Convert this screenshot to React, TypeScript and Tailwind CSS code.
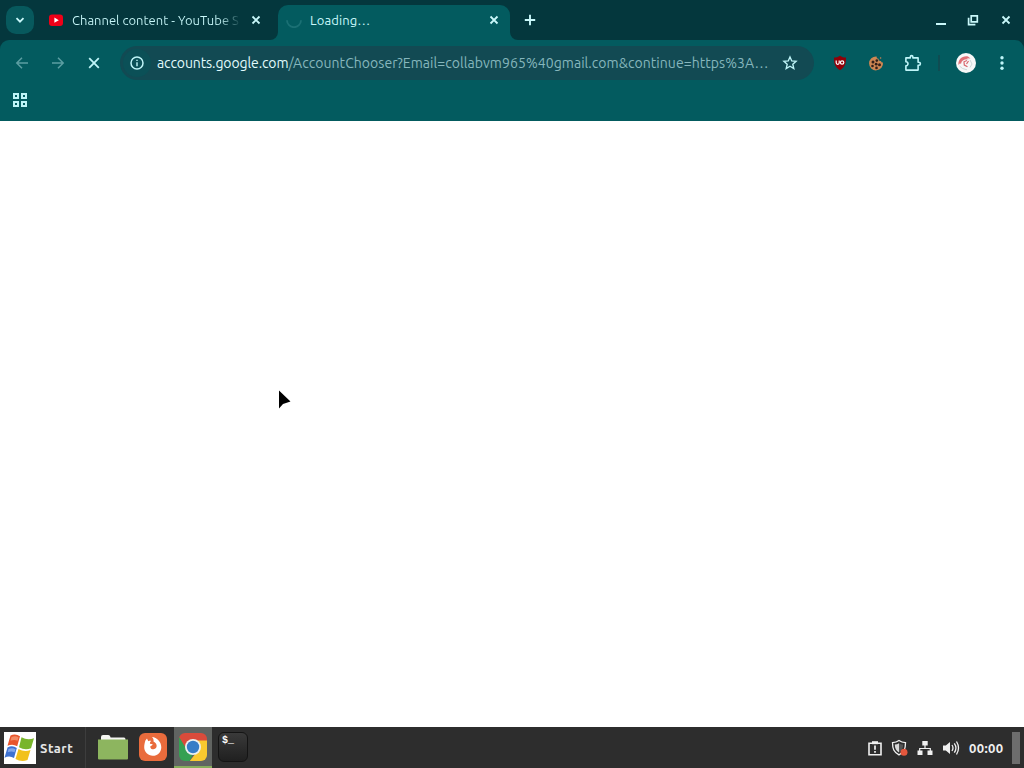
import type { ReactNode } from "react";

function Icon({ size, children, className = "" }: { size: number; children: ReactNode; className?: string }) {
  return (
    <svg width={size} height={size} viewBox={`0 0 ${size} ${size}`} fill="none" stroke="currentColor" className={`shrink-0 ${className}`}>
      {children}
    </svg>
  );
}

function CloseIcon({ className = "" }: { className?: string }) {
  return (
    <Icon size={10} className={className}>
      <path d="M1.5 1.5l7 7M8.5 1.5l-7 7" strokeWidth="1.8" />
    </Icon>
  );
}

function TabStrip() {
  return (
    <div className="flex h-10 items-center bg-[#04373d] pl-1.5 text-[#c9f8fa]">
      <button className="flex h-7 w-7 items-center justify-center rounded-[10px] bg-[#07595d]">
        <Icon size={10}>
          <path d="M1.5 3.2L5 6.7l3.5-3.5" strokeWidth="1.8" />
        </Icon>
      </button>

      {/* Background tab */}
      <div className="flex h-full w-[244px] items-center pl-[14px]">
        <Icon size={16}>
          <rect x="1" y="2.5" width="14" height="11.5" rx="3" fill="#f00018" stroke="none" />
          <path d="M6.4 5.6l4.4 2.6-4.4 2.6z" fill="#fff" stroke="none" />
        </Icon>
        <span className="mt-px ml-2 w-[169px] bg-linear-to-r from-[#c9f8fa] from-[87%] to-[#c9f8fa]/0 bg-clip-text text-[13px] whitespace-nowrap text-transparent">
          Channel content - YouTube S
        </span>
        <CloseIcon className="ml-[10px]" />
      </div>

      {/* Active tab */}
      <div className="relative mt-[5px] flex h-[35px] w-[232px] items-center rounded-t-[10px] bg-[#035b5f] pb-[5px] pl-2">
        <svg width="8" height="8" className="absolute bottom-0 -left-2" fill="#035b5f">
          <path d="M8 0v8H0a8 8 0 0 0 8-8z" />
        </svg>
        <svg width="8" height="8" className="absolute -right-2 bottom-0" fill="#035b5f">
          <path d="M0 0v8h8a8 8 0 0 1-8-8z" />
        </svg>
        <Icon size={16} className="text-[#1b7074]">
          <path d="M1 8.2a7 7 0 0 0 14 0" strokeWidth="1.8" />
        </Icon>
        <span className="mt-px ml-2 w-[179px] text-[13px] tracking-[0.1px]">Loading…</span>
        <CloseIcon />
      </div>

      <Icon size={12} className="ml-[14px]">
        <path d="M6 .8v10.4M.8 6h10.4" strokeWidth="1.9" />
      </Icon>

      <div className="ml-auto flex items-center pr-[13px]">
        <Icon size={12}>
          <path d="M1 10h10" strokeWidth="2" />
        </Icon>
        <Icon size={12} className="ml-5">
          <path d="M4.2 1.8h6.1v6.1H4.2z" strokeWidth="1.7" />
          <path d="M1.6 3.7v6.9h6.8" strokeWidth="1.7" />
        </Icon>
        <CloseIcon className="ml-[22px]" />
      </div>
    </div>
  );
}

function CookieIcon() {
  return (
    <Icon size={16}>
      <path d="M8.6 1.4a2 2 0 0 0 1.8 2.3A2.3 2.3 0 0 0 13 6c.2 1 .9 1.5 2 1.5A7 7 0 1 1 8.6 1.4z" fill="#ce8652" stroke="none" />
      <g fill="#332019" stroke="none">
        <circle cx="5" cy="7" r="1.5" />
        <circle cx="8.8" cy="5.6" r="1.3" />
        <circle cx="8.2" cy="9.2" r="1.4" />
        <circle cx="4.5" cy="11" r="1.3" />
        <circle cx="11.5" cy="9.7" r="1.5" />
        <circle cx="8.5" cy="12.9" r="1.3" />
      </g>
      <circle cx="12.6" cy="3" r=".8" fill="#ce8652" stroke="none" />
    </Icon>
  );
}

function Toolbar() {
  return (
    <div className="bg-[#04373d]">
      <div className="h-[81px] rounded-t-[9px] bg-[#035b5f]">
        <div className="flex h-[46px] items-center pl-[15px] text-[#bff5f8]">
          <Icon size={14} className="text-[#5c9ea2]">
            <path d="M13 7H2M7 1.8L1.8 7 7 12.2" strokeWidth="1.5" />
          </Icon>
          <Icon size={14} className="ml-[22px] text-[#5c9ea2]">
            <path d="M1 7h11M7 1.8L12.2 7 7 12.2" strokeWidth="1.5" />
          </Icon>
          <Icon size={12} className="ml-[23px]">
            <path d="M1.2 1.2l9.6 9.6M10.8 1.2l-9.6 9.6" strokeWidth="1.8" />
          </Icon>

          <div className="ml-5 flex h-[34px] w-[694px] items-center rounded-full bg-[#124a53] pl-[3px]">
            <div className="flex h-7 w-7 items-center justify-center rounded-full bg-[#0b5057]">
              <Icon size={14}>
                <circle cx="7" cy="7" r="6" strokeWidth="1.5" />
                <path d="M7 6.2v4M7 3.7v1.4" strokeWidth="1.4" />
              </Icon>
            </div>
            <span className="ml-[6px] w-[625px] text-[14px] tracking-[0.06px] whitespace-nowrap text-[#86b7bd]">
              <span className="tracking-[-0.1px] text-[#e2fcfd]">accounts.google.com</span>
              /AccountChooser?Email=collabvm965%40gmail.com&amp;continue=https%3A…
            </span>
            <Icon size={16}>
              <path d="M8 1.9l1.75 4 4.35.4-3.3 2.9 1 4.3L8 11.2l-3.8 2.3 1-4.3-3.3-2.9 4.35-.4z" strokeWidth="1.35" />
            </Icon>
          </div>

          <Icon size={16} className="ml-[18px]">
            <path d="M8 .8c1.8 1.3 3.8 1.8 6 1.8 0 6.3-.8 9.4-6 12.6C2.8 12 2 8.9 2 2.6 4.2 2.6 6.2 2.1 8 .8z" fill="#900008" stroke="none" />
            <path d="M4.2 5.6v2.2a1.5 1.5 0 0 0 3 0V5.6" stroke="#fff" strokeWidth="1.2" />
            <circle cx="10.1" cy="7.5" r="1.7" stroke="#fff" strokeWidth="1.2" />
          </Icon>
          <div className="ml-5">
            <CookieIcon />
          </div>
          <Icon size={18} className="mb-px ml-[20px]">
            <path d="M1.9 3.9h4.4V2.9a1.3 1.3 0 0 1 2.6 0v1h5.2v4.3h.8a1.5 1.5 0 0 1 0 3h-.8v4.9H1.9v-4.2a2.1 2.1 0 0 0 0-4.2z" strokeWidth="1.6" strokeLinejoin="round" />
          </Icon>
          <div className="ml-4 h-4 w-0.5 bg-[#0f4c52]" />
          <Icon size={20} className="ml-4">
            <circle cx="10" cy="10" r="10" fill="#f7f8f8" stroke="none" />
            <path d="M2.5 12c-.8-5 3.5-9.5 9.5-8.5l2.500 2-4-.3 2.500 1.200C8 6 5.500 7.500 5 11l-1-.8z" fill="#e07076" stroke="none" />
            <path d="M11 7.500l-3 1.300.3 3.200 3.200 1.700M12.500 8l-2 3" stroke="#d9666d" strokeWidth="1.200" />
            <path d="M3.500 13l3 2.500 4.500 1.300M14 7l2 4-2 3.500" stroke="#cdd9da" />
          </Icon>
          <Icon size={16} className="ml-[18px]">
            <g fill="currentColor" stroke="none">
              <circle cx="8" cy="2.7" r="1.7" />
              <circle cx="8" cy="8" r="1.7" />
              <circle cx="8" cy="13.3" r="1.7" />
            </g>
          </Icon>
        </div>

        {/* Bookmarks bar */}
        <div className="flex h-7 items-center pl-[13px] text-[#bff5f8]">
          <Icon size={14}>
            <path d="M1 1h4v4H1zM9 1h4v4H9zM1 9h4v4H1zM9 9h4v4H9z" strokeWidth="2" />
          </Icon>
        </div>
      </div>
    </div>
  );
}

function StartLogo() {
  return (
    <svg width="32" height="32" viewBox="0 0 32 32" className="shrink-0 bg-white">
      <path d="M6.5 3.5q5-2.5 9.5.8l-2.8 10q-4.500-3-9.700-.5z" fill="#e8552c" />
      <path d="M17.5 5.3q6 3.5 12.500 1l-3 10q-6 2.500-12-1z" fill="#79b52c" />
      <path d="M3.5 15.5q5-2.500 9.300.5L10 26q-4.500-3-9.500-.3z" fill="#3d72d2" />
      <path d="M14.5 17q6 3.500 12 1l-3 10q-6 2.500-12-1z" fill="#f2c11c" />
      <path d="M7.5 5q4-1.500 7 .3l-1 3.500q-3-1.500-7 0z" fill="#f38a63" />
      <path d="M4.5 17q4-1.500 7 .3l-1 3q-3-1.500-6.800 0z" fill="#80a6ec" />
    </svg>
  );
}

function FolderIcon() {
  return (
    <svg width="32" height="32" viewBox="0 0 32 32">
      <path d="M4 5q0-2 2-2h5q1.500 0 2 1l.6 1.500H27q1.500 0 1.500 2V11H4z" fill="#f5f6f2" />
      <path d="M1 7.500h30v19q0 1-1 1H2q-1 0-1-1z" fill="#8db55f" />
    </svg>
  );
}

function FirefoxIcon() {
  return (
    <svg width="30" height="30" viewBox="0 0 30 30" className="-mt-0.5">
      <rect x="1" y="1" width="28" height="28" rx="6" fill="#e96b3c" />
      <path d="M7.4 8.500L9 6.500l1.300 2.700c1.200-.5 2-.4 3-.2-1.200.8-1.500 1.700-1.300 2.800l2.700.5c-.2 1.300-1.500 1.500-2.500 2.100.2 2.100 1.700 3 3.300 2.800 2.200-.2 3.400-2 3.100-4-.3-1.700-1.500-2.700-3.100-3.700.3-1.900-.2-3.300-1.500-4.500 4.800.5 9.300 4.700 9.300 10.200 0 5-3.800 8.600-8.500 8.600s-8.600-3.700-8.600-8.500c0-2.700.6-4.800 1.200-6.800z" fill="#fff" />
    </svg>
  );
}

function ChromeIcon() {
  return (
    <svg width="30" height="30" viewBox="0 0 30 30">
      <defs>
        <clipPath id="chrome-tile">
          <rect x="1" y="1" width="28" height="28" rx="6" />
        </clipPath>
      </defs>
      <g clipPath="url(#chrome-tile)">
        <path d="M0 0h30v9H15l-7 9L0 4z" fill="#da4b3b" />
        <path d="M0 3l9 15 6 4-4 8H0z" fill="#35a052" />
        <path d="M15 8.500h15V30H11l10-13z" fill="#f9c92f" />
      </g>
      <circle cx="15" cy="15" r="8" fill="#edf0ef" />
      <circle cx="15" cy="15" r="6.200" fill="#367dc7" />
    </svg>
  );
}

function TerminalIcon() {
  return (
    <div className="-mt-0.5 h-[30px] w-[30px] rounded-[6px] border border-[#141414] bg-linear-to-b from-[#3a3a3a] to-[#202020] pt-px pl-[3px] font-['Liberation_Mono',monospace] text-[10px] leading-[13px] font-bold text-white">
      $_
    </div>
  );
}

function Tray() {
  return (
    <div className="ml-auto flex h-full items-center text-[#f0f0f0]">
      <Icon size={16}>
        <path d="M2 3.300h12v11.500H2z" strokeWidth="1.600" />
        <path d="M5 1.200h6v3H5z" fill="currentColor" stroke="none" />
        <path d="M8 5.500v4.200M8 11v1.800" strokeWidth="1.700" />
      </Icon>
      <Icon size={18} className="ml-2">
        <path d="M8 1.600c2 1.500 4 2 6.500 2 0 6-1.200 9.500-6.500 12.300C2.700 13.100 1.500 9.600 1.500 3.600 4 3.600 6 3.100 8 1.600z" strokeWidth="1.300" />
        <path d="M8 4.200c1.200.8 2.600 1.200 4.200 1.300-.2 4-1.200 6-4.200 8z" fill="#555" stroke="none" />
        <path d="M8 4.200C6.800 5 5.400 5.400 3.800 5.500c.1 4 1.200 6 4.200 8z" fill="#d8d8d8" stroke="none" />
        <circle cx="13" cy="13.200" r="3.500" fill="#e4573d" stroke="none" />
      </Icon>
      <Icon size={16} className="ml-2">
        <path d="M8 5v3M2.700 11V8.500h10.600V11" strokeWidth="1.200" />
        <path d="M5.300 1h5.400v4.500H5.300zM.5 10.500h5V15h-5zM10.500 10.500h5V15h-5z" fill="currentColor" stroke="none" />
      </Icon>
      <Icon size={18} className="ml-[9px]">
        <path d="M1 6.500h2.800L8 3v12l-4.200-3.500H1z" fill="currentColor" stroke="none" />
        <path d="M10 6q2 3 0 6M12.300 4.300q3.300 4.700 0 9.400M14.500 2.500q4 6.500 0 13" strokeWidth="1.300" />
      </Icon>
      <span className="mt-0.5 ml-[9px] w-[35px] text-[13px] font-bold tracking-[0.4px] whitespace-nowrap">00:00</span>
      <div className="mr-1 ml-2 h-8 w-2 bg-[#6d6d6d]" />
    </div>
  );
}

function Taskbar() {
  return (
    <div className="flex h-[41px] items-center bg-[#2d2d2d]">
      <button className="flex h-full w-[86px] items-center border-r border-[#3d3d3d] pl-1">
        <StartLogo />
        <span className="mt-0.5 ml-1 text-[13px] font-bold tracking-[0.5px] text-[#e5e5e5]">Start</span>
      </button>
      <div className="ml-[7px] flex h-full items-center">
        <div className="flex w-10 justify-center">
          <FolderIcon />
        </div>
        <div className="flex w-10 justify-center">
          <FirefoxIcon />
        </div>
        <div className="mx-px flex h-full w-[38px] items-center justify-center border-b-2 border-[#87ad5c] bg-[#616461]">
          <ChromeIcon />
        </div>
        <div className="flex w-10 justify-center">
          <TerminalIcon />
        </div>
      </div>
      <Tray />
    </div>
  );
}

export default function App() {
  return (
    <div className="relative flex h-[768px] w-[1024px] flex-col overflow-hidden bg-white font-[Ubuntu,'Noto_Sans',sans-serif]">
      <TabStrip />
      <Toolbar />
      <main className="flex-1 bg-white" />
      <Taskbar />

      {/* Mouse pointer */}
      <svg width="14" height="20" viewBox="0 0 14 20" className="absolute top-[390px] left-[278px]">
        <path d="M1 .5v18l4-4.500 7.500-2.500z" fill="#000" />
      </svg>
    </div>
  );
}
